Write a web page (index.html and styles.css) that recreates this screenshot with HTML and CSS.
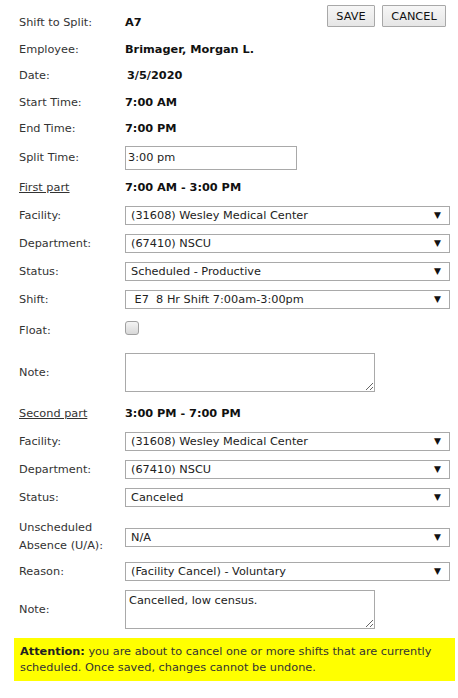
FILE: index.html
```html
<!DOCTYPE html>
<html>
<head>
<meta charset="utf-8">
<link rel="stylesheet" href="styles.css">
</head>
<body>
<div class="page">
  <div class="actions">
    <button class="btn btn-save">SAVE</button>
    <button class="btn btn-cancel">CANCEL</button>
  </div>

  <div class="row h27"><div class="label">Shift to Split:</div><div class="value">A7</div></div>
  <div class="row h26"><div class="label">Employee:</div><div class="value">Brimager, Morgan L.</div></div>
  <div class="row h27"><div class="label">Date:</div><div class="value date">3/5/2020</div></div>
  <div class="row h26"><div class="label">Start Time:</div><div class="value">7:00 AM</div></div>
  <div class="row h27"><div class="label">End Time:</div><div class="value">7:00 PM</div></div>
  <div class="row h31"><div class="label">Split Time:</div><input class="text-input" type="text" value="3:00 pm"></div>
  <div class="row h29"><div class="label"><span class="section">First part</span></div><div class="value">7:00 AM - 3:00 PM</div></div>
  <div class="row h27"><div class="label">Facility:</div><div class="select"><span class="select-text">(31608) Wesley Medical Center</span><span class="arrow">▼</span></div></div>
  <div class="row h28"><div class="label">Department:</div><div class="select"><span class="select-text">(67410) NSCU</span><span class="arrow">▼</span></div></div>
  <div class="row h28"><div class="label">Status:</div><div class="select"><span class="select-text">Scheduled - Productive</span><span class="arrow">▼</span></div></div>
  <div class="row h29"><div class="label">Shift:</div><div class="select"><span class="select-text">&nbsp;E7&nbsp;&nbsp;8 Hr Shift 7:00am-3:00pm</span><span class="arrow">▼</span></div></div>
  <div class="row h32"><div class="label">Float:</div><span class="checkbox"></span></div>
  <div class="row h52"><div class="label">Note:</div><textarea class="note"></textarea></div>
  <div class="row h30"><div class="label"><span class="section">Second part</span></div><div class="value">3:00 PM - 7:00 PM</div></div>
  <div class="row h27"><div class="label">Facility:</div><div class="select"><span class="select-text">(31608) Wesley Medical Center</span><span class="arrow">▼</span></div></div>
  <div class="row h28"><div class="label">Department:</div><div class="select"><span class="select-text">(67410) NSCU</span><span class="arrow">▼</span></div></div>
  <div class="row h28"><div class="label">Status:</div><div class="select"><span class="select-text">Canceled</span><span class="arrow">▼</span></div></div>
  <div class="row h36 gap-top"><div class="label two-line">Unscheduled<br>Absence (U/A):</div><div class="select"><span class="select-text">N/A</span><span class="arrow">▼</span></div></div>
  <div class="row h32"><div class="label">Reason:</div><div class="select"><span class="select-text">(Facility Cancel) - Voluntary</span><span class="arrow">▼</span></div></div>
  <div class="row h45"><div class="label">Note:</div><textarea class="note">Cancelled, low census.</textarea></div>

  <div class="attention"><strong>Attention:</strong> you are about to cancel one or more shifts that are currently scheduled. Once saved, changes cannot be undone.</div>
</div>
</body>
</html>
```

FILE: styles.css
```css
html, body {
  margin: 0;
  padding: 0;
  background: #ffffff;
}
body {
  font-family: "DejaVu Sans", Verdana, sans-serif;
  font-size: 11.3px;
  color: #333333;
}
.page {
  position: relative;
  padding: 9px 8px 0 19px;
}
.actions {
  position: absolute;
  top: 5px;
  right: 12px;
  display: flex;
  gap: 7px;
}
.btn {
  height: 22px;
  padding: 0;
  font-family: "DejaVu Sans", Verdana, sans-serif;
  font-size: 11.3px;
  color: #111;
  background: linear-gradient(#f6f6f6, #e6e6e6);
  border: 1px solid #a8a8a8;
  border-radius: 1px;
}
.btn-save { width: 48px; }
.btn-cancel { width: 64px; }

.row {
  display: flex;
  align-items: center;
}
.h26 { height: 26px; }
.h27 { height: 27px; }
.h28 { height: 28px; }
.h29 { height: 29px; }
.h30 { height: 30px; }
.h31 { height: 31px; }
.h32 { height: 32px; }
.h36 { height: 36px; }
.h45 { height: 45px; }
.h52 { height: 52px; }
.gap-top { margin-top: 8px; }

.label {
  width: 106px;
  flex: none;
  color: #333;
}
.two-line { line-height: 18px; }
.section { text-decoration: underline; }
.value {
  font-weight: bold;
  color: #111;
}
.date { padding-left: 2px; }

.text-input {
  box-sizing: border-box;
  width: 172px;
  height: 24px;
  margin: 0;
  padding: 0 2px;
  border: 1px solid #a9a9a9;
  font-family: "DejaVu Sans", Verdana, sans-serif;
  font-size: 11.3px;
  color: #222;
  outline: none;
}

.select {
  position: relative;
  box-sizing: border-box;
  width: 325px;
  height: 19px;
  border: 1px solid #a9a9a9;
  background: #fff;
  display: flex;
  align-items: center;
  padding-left: 5px;
  color: #222;
}
.select-text { white-space: pre; }
.arrow {
  position: absolute;
  right: 8px;
  top: 3px;
  font-size: 9px;
  line-height: 11px;
  color: #111;
}

.checkbox {
  box-sizing: border-box;
  width: 14px;
  height: 14px;
  margin-top: -4px;
  border: 1px solid #a0a0a0;
  border-radius: 3px;
  background: linear-gradient(#f4f4f4, #d8d8d8);
}

.note {
  box-sizing: border-box;
  width: 250px;
  height: 39px;
  margin: 0;
  padding: 3px 3px;
  border: 1px solid #a9a9a9;
  font-family: "DejaVu Sans", Verdana, sans-serif;
  font-size: 11.3px;
  color: #222;
  resize: both;
  outline: none;
}

.attention {
  margin: 6px -5px 0 -5px;
  padding: 6px 6px 5px 6px;
  background: #ffff00;
  color: #333;
  line-height: 16px;
}
.attention strong { color: #222; }
```
